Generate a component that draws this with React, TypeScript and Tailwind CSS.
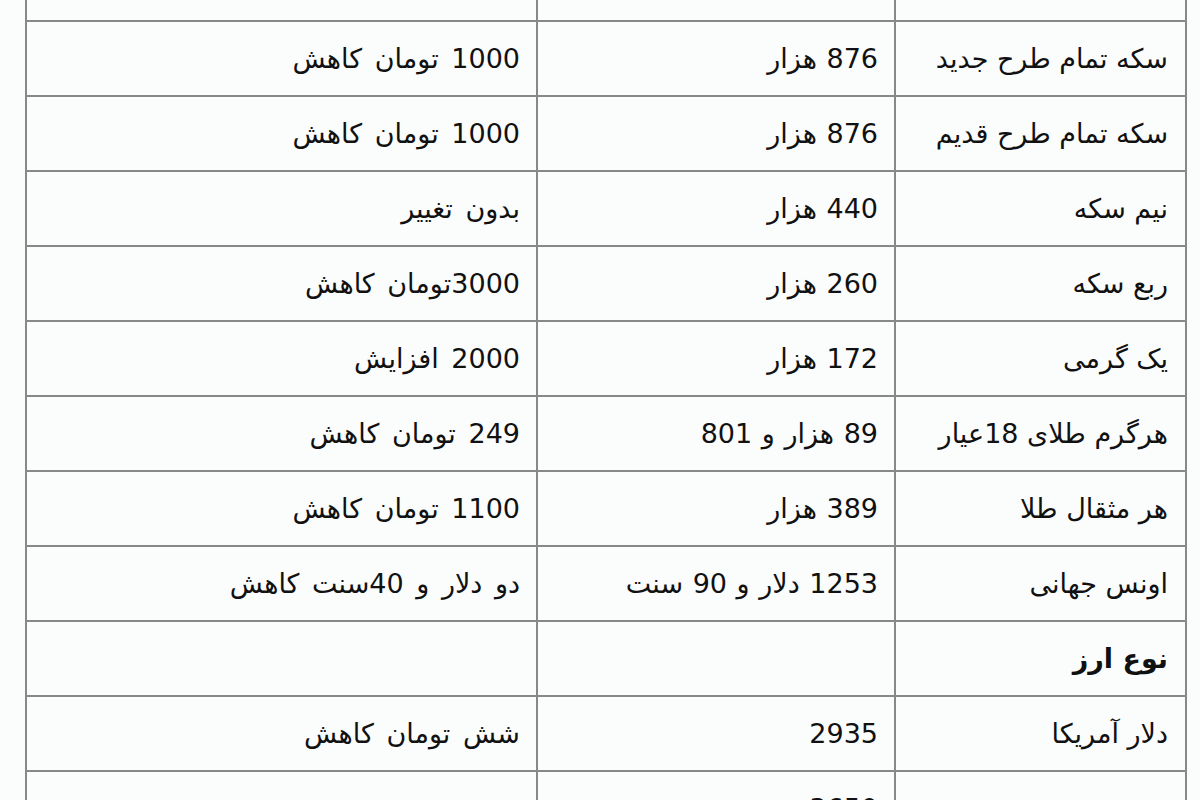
import React from "react";

type Row = { a: string; b: string; c: string; bold?: boolean };

const rows: Row[] = [
  { a: "", b: "", c: "" },
  { a: "سکه تمام طرح جدید", b: "876 هزار", c: "1000 تومان کاهش" },
  { a: "سکه تمام طرح قدیم", b: "876 هزار", c: "1000 تومان کاهش" },
  { a: "نیم سکه", b: "440 هزار", c: "بدون تغییر" },
  { a: "ربع سکه", b: "260 هزار", c: "3000تومان کاهش" },
  { a: "یک گرمی", b: "172 هزار", c: "2000 افزایش" },
  { a: "هرگرم طلای 18عیار", b: "89 هزار و 801", c: "249 تومان کاهش" },
  { a: "هر مثقال طلا", b: "389 هزار", c: "1100 تومان کاهش" },
  { a: "اونس جهانی", b: "1253 دلار و 90 سنت", c: "دو دلار و 40سنت کاهش" },
  { a: "نوع ارز", b: "", c: "", bold: true },
  { a: "دلار آمریکا", b: "2935", c: "شش تومان کاهش" },
  { a: "یورو", b: "3650", c: "بدون تغییر" },
];

export default function App() {
  return (
    <div
      className="w-[1200px] h-[800px] overflow-hidden bg-[#fbfdfd] text-[#111] text-[27px] leading-none"
      style={{ fontFamily: '"DejaVu Sans", "Noto Sans", sans-serif' }}
    >
      <div
        dir="rtl"
        className="ml-[25px] mt-[-55px] w-[1162px] border-x-2 border-[#888]"
      >
        {rows.map((r, i) => (
          <div key={i} className="flex h-[75px] border-t-2 border-[#888]">
            <div
              className={`w-[291px] shrink-0 flex items-center pr-[17px] border-l-2 border-[#888] whitespace-nowrap ${
                r.bold ? "font-bold" : ""
              }`}
            >
              {r.a}
            </div>
            <div className="w-[358px] shrink-0 flex items-center pr-[16px] border-l-2 border-[#888] whitespace-nowrap [word-spacing:1px]">
              {r.b}
            </div>
            <div className="flex-1 flex items-center pr-[16px] whitespace-nowrap [word-spacing:4px]">
              {r.c}
            </div>
          </div>
        ))}
      </div>
    </div>
  );
}
